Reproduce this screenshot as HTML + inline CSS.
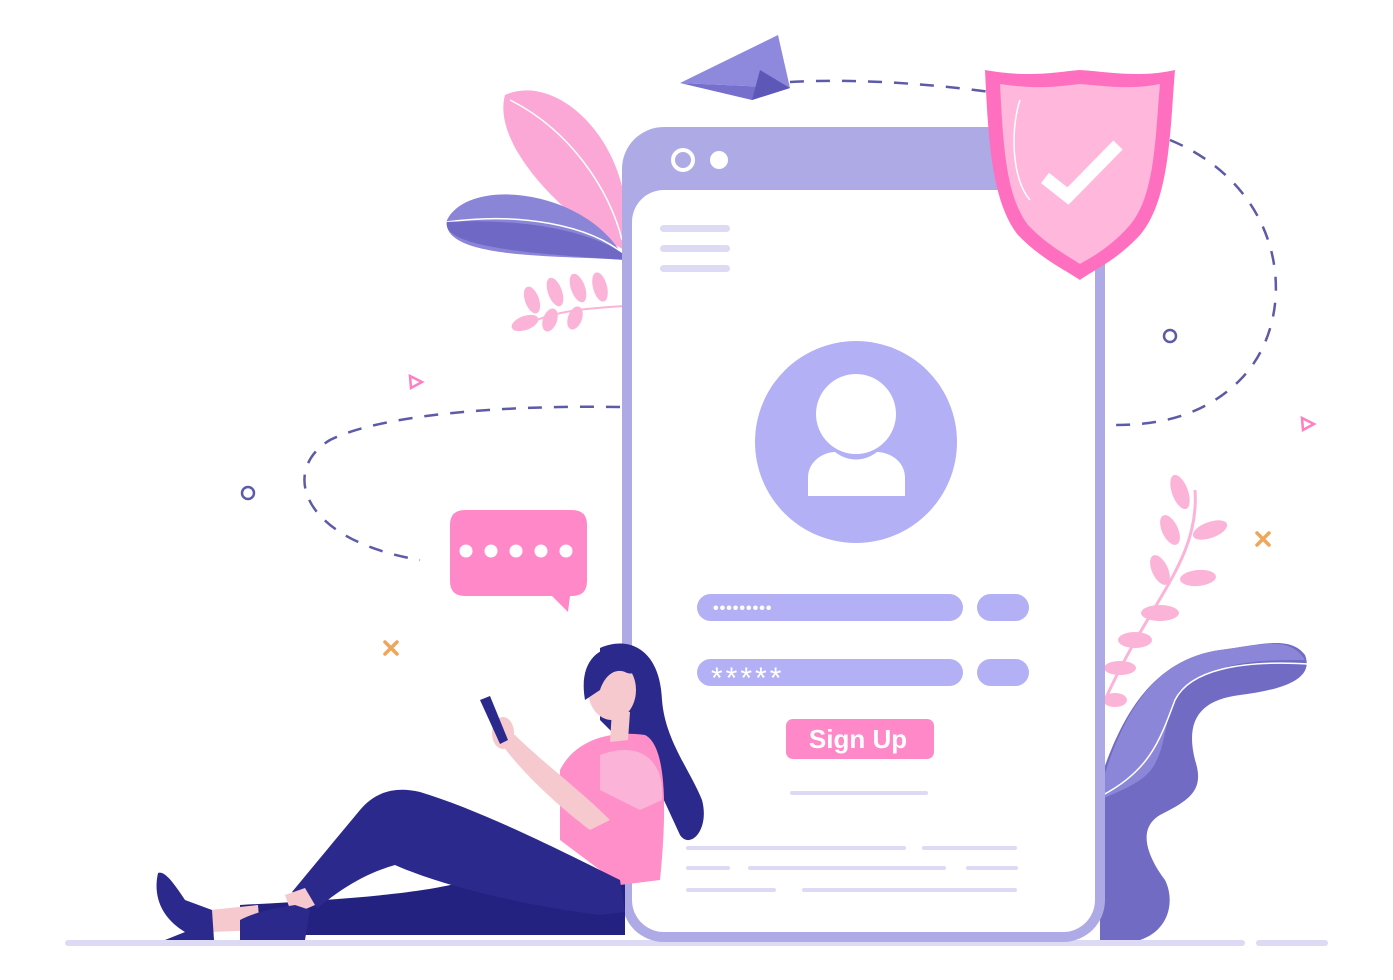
<!DOCTYPE html>
<html><head><meta charset="utf-8"><style>
html,body{margin:0;padding:0;background:#fff;}
svg{display:block}
</style></head><body>
<svg width="1393" height="980" viewBox="0 0 1393 980" xmlns="http://www.w3.org/2000/svg">
<rect width="1393" height="980" fill="#fff"/>
<rect x="65" y="940" width="1180" height="6" rx="3" fill="#dcdaf5"/>
<rect x="1256" y="940" width="72" height="6" rx="3" fill="#dcdaf5"/>
<g fill="none" stroke="#5d5aa8" stroke-width="2.5" stroke-dasharray="14 12">
<path d="M620 407 C 500 405 380 415 330 440 C 280 470 300 540 420 560"/>
<path d="M790 82 C 860 78 940 85 990 92"/>
<path d="M1170 140 C 1290 190 1300 320 1240 380 C 1200 420 1150 425 1115 425"/>
</g>
<circle cx="248" cy="493" r="6" fill="none" stroke="#5d5aa8" stroke-width="2.5"/>
<circle cx="1170" cy="336" r="6" fill="none" stroke="#5d5aa8" stroke-width="2.5"/>
<path d="M410 376 L422 382 L411 388 Z" fill="none" stroke="#ff7fc0" stroke-width="2.5"/>
<path d="M1302 418 L1314 424 L1303 430 Z" fill="none" stroke="#ff7fc0" stroke-width="2.5"/>
<g stroke="#f0a65a" stroke-width="3.5" stroke-linecap="round">
<path d="M385 642 L397 654 M397 642 L385 654"/>
<path d="M1257 533 L1269 545 M1269 533 L1257 545"/>
</g>
<path d="M680 83 L778 35 L790 88 Z" fill="#8e89dd"/>
<path d="M680 83 L790 88 L752 100 Z" fill="#7670cc"/>
<path d="M760 70 L790 88 L752 100 Z" fill="#5d58b8"/>
<path d="M505 95 C 560 70 640 150 625 250 C 580 230 490 150 505 95 Z" fill="#fba8d6"/>
<path d="M510 100 C 570 130 610 190 622 240" stroke="#fff" stroke-width="1.5" fill="none"/>
<path d="M447 220 C 470 175 590 190 625 260 C 560 255 440 260 447 220 Z" fill="#8b85d8"/>
<path d="M447 222 C 520 212 590 225 625 255" stroke="#fff" stroke-width="1.5" fill="none"/>
<path d="M447 222 C 440 250 560 255 625 260 L 625 255 C 590 230 520 218 447 222 Z" fill="#6f69c5"/>
<g fill="#fbb4d8">
<ellipse cx="532" cy="300" rx="7" ry="14" transform="rotate(-20 532 300)"/>
<ellipse cx="555" cy="292" rx="7" ry="15" transform="rotate(-20 555 292)"/>
<ellipse cx="578" cy="288" rx="7" ry="15" transform="rotate(-20 578 288)"/>
<ellipse cx="600" cy="287" rx="7" ry="15" transform="rotate(-15 600 287)"/>
<ellipse cx="525" cy="323" rx="14" ry="7" transform="rotate(-20 525 323)"/>
<ellipse cx="550" cy="320" rx="7" ry="12" transform="rotate(20 550 320)"/>
<ellipse cx="575" cy="318" rx="7" ry="12" transform="rotate(20 575 318)"/>
</g>
<path d="M515 330 C 550 310 590 308 625 306" stroke="#fbb4d8" stroke-width="2" fill="none"/>
<g fill="#fbb4d8">
<ellipse cx="1180" cy="492" rx="8" ry="18" transform="rotate(-20 1180 492)"/>
<ellipse cx="1210" cy="530" rx="18" ry="8" transform="rotate(-20 1210 530)"/>
<ellipse cx="1170" cy="530" rx="8" ry="16" transform="rotate(-25 1170 530)"/>
<ellipse cx="1198" cy="578" rx="18" ry="8" transform="rotate(-5 1198 578)"/>
<ellipse cx="1160" cy="570" rx="8" ry="16" transform="rotate(-25 1160 570)"/>
<ellipse cx="1160" cy="613" rx="19" ry="8"/>
<ellipse cx="1135" cy="640" rx="17" ry="8"/>
<ellipse cx="1120" cy="668" rx="16" ry="7"/>
<ellipse cx="1115" cy="700" rx="12" ry="7"/>
</g>
<path d="M1195 490 C 1200 560 1150 600 1105 700" stroke="#fbb4d8" stroke-width="3" fill="none"/>
<path d="M1100 780 C 1120 720 1150 660 1220 650 C 1260 645 1290 635 1305 655 C 1315 680 1280 690 1240 695 C 1200 700 1185 720 1195 760 C 1205 790 1190 800 1160 815 C 1135 830 1150 860 1165 880 C 1175 900 1170 930 1140 940 L 1100 940 Z" fill="#716bc4"/>
<path d="M1100 790 C 1120 720 1150 660 1220 650 C 1260 645 1290 635 1305 660 C 1260 660 1220 660 1180 690 C 1160 720 1170 760 1140 780 C 1125 790 1110 795 1100 800 Z" fill="#8c86d8"/>
<path d="M1103 795 C 1150 770 1160 740 1175 700 C 1190 670 1240 660 1308 664" stroke="#fff" stroke-width="1.5" fill="none"/>
<rect x="622" y="127" width="483" height="815" rx="42" fill="#aeaae6"/>
<rect x="632" y="190" width="463" height="742" rx="32" fill="#fff"/>
<circle cx="683" cy="160" r="10" fill="none" stroke="#fff" stroke-width="4"/>
<circle cx="719" cy="160" r="9" fill="#fff"/>
<g fill="#dcdaf5">
<rect x="660" y="225" width="70" height="7" rx="3.5"/>
<rect x="660" y="245" width="70" height="7" rx="3.5"/>
<rect x="660" y="265" width="70" height="7" rx="3.5"/>
</g>
<circle cx="856" cy="442" r="101" fill="#b3b0f5"/>
<ellipse cx="856" cy="414" rx="40" ry="40" fill="#fff"/>
<path d="M808 496 L808 478 C 808 460 825 452 835 452 C 848 462 864 462 877 452 C 888 452 905 460 905 478 L905 496 Z" fill="#fff"/>
<rect x="697" y="594" width="266" height="27" rx="13.5" fill="#b3b0f5"/>
<rect x="977" y="594" width="52" height="27" rx="13.5" fill="#b3b0f5"/>
<text x="713" y="613" font-family="Liberation Sans, sans-serif" font-size="16" font-weight="bold" fill="#fff" letter-spacing="1">•••••••••</text>
<rect x="697" y="659" width="266" height="27" rx="13.5" fill="#b3b0f5"/>
<rect x="977" y="659" width="52" height="27" rx="13.5" fill="#b3b0f5"/>
<text x="711" y="688" font-family="Liberation Sans, sans-serif" font-size="30" fill="#fff" letter-spacing="3">*****</text>
<rect x="786" y="719" width="148" height="40" rx="7" fill="#ff88c8"/>
<text x="858" y="748" text-anchor="middle" font-family="Liberation Sans, sans-serif" font-size="26" font-weight="bold" fill="#fff">Sign Up</text>
<g fill="#dcdaf5">
<rect x="790" y="791" width="138" height="4" rx="2"/>
<rect x="686" y="846" width="220" height="4" rx="2"/>
<rect x="922" y="846" width="95" height="4" rx="2"/>
<rect x="686" y="866" width="44" height="4" rx="2"/>
<rect x="748" y="866" width="198" height="4" rx="2"/>
<rect x="966" y="866" width="52" height="4" rx="2"/>
<rect x="686" y="888" width="90" height="4" rx="2"/>
<rect x="802" y="888" width="215" height="4" rx="2"/>
</g>
<path d="M985 70 C 1030 78 1055 72 1080 70 C 1110 72 1140 78 1175 70 C 1170 130 1170 200 1140 235 C 1115 262 1090 272 1080 280 C 1065 270 1040 258 1018 235 C 990 200 988 130 985 70 Z" fill="#ff6fbf"/>
<path d="M1000 84 C 1040 90 1060 86 1080 84 C 1105 86 1130 90 1160 84 C 1155 140 1155 195 1130 225 C 1110 248 1090 258 1080 264 C 1068 256 1048 246 1028 225 C 1005 195 1003 140 1000 84 Z" fill="#ffb8dc"/>
<path d="M1045 178 L1068 196 L1118 145" stroke="#fff" stroke-width="13" fill="none"/>
<path d="M1020 100 C 1010 130 1012 180 1030 200" stroke="#fff" stroke-width="1.5" fill="none"/>
<path d="M465 510 L572 510 Q587 510 587 525 L587 581 Q587 596 572 596 L570 596 L568 612 L552 596 L465 596 Q450 596 450 581 L450 525 Q450 510 465 510 Z" fill="#ff88c8"/>
<g fill="#fff"><circle cx="466" cy="551" r="6.5"/><circle cx="491" cy="551" r="6.5"/><circle cx="516" cy="551" r="6.5"/><circle cx="541" cy="551" r="6.5"/><circle cx="566" cy="551" r="6.5"/></g>
<!-- woman hair back -->
<path d="M600 648 C 630 635 660 650 662 700 C 665 740 690 770 702 800 C 710 830 690 850 680 835 L 650 770 L 600 720 Z" fill="#2b2a8c"/>
<!-- straight leg -->
<path d="M625 875 L 625 935 L 240 935 L 240 905 C 330 900 420 895 470 880 C 530 870 580 865 625 875 Z" fill="#232280"/>
<!-- shirt -->
<path d="M560 770 C 575 740 610 730 645 735 C 665 745 668 800 660 880 L 620 885 L 560 840 Z" fill="#ff8fc8"/>
<path d="M600 755 C 640 740 665 760 662 800 L640 810 L 600 790 Z" fill="#fbb4d8"/>
<!-- bent leg -->
<path d="M620 880 C 560 850 480 810 420 792 C 395 786 375 792 360 810 C 335 840 312 868 292 892 L 318 908 C 345 885 370 872 395 865 C 440 885 520 905 600 915 L 625 912 Z" fill="#2b2a8c"/>
<path d="M612 710 L630 712 L628 740 L610 742 Z" fill="#f6c9cf"/>
<ellipse cx="612" cy="690" rx="24" ry="30" fill="#f6c9cf"/>
<path d="M585 700 C 578 660 600 642 630 648 C 645 655 640 680 625 672 C 615 668 605 675 600 690 Z" fill="#2b2a8c"/>
<path d="M496 735 C 510 760 550 800 590 830 L 610 820 C 580 790 540 760 515 735 Z" fill="#f6c9cf"/>
<ellipse cx="503" cy="733" rx="11" ry="16" fill="#f6c9cf"/>
<path d="M480 700 L490 696 L508 740 L500 744 Z" fill="#2b2a8c"/>
<path d="M210 910 L 258 905 L 260 930 L 210 932 Z" fill="#f6c9cf"/>
<path d="M285 895 L 305 888 L 315 905 L 292 915 Z" fill="#f6c9cf"/>
<path d="M158 873 C 165 870 175 885 185 900 L 212 910 L 214 940 L 165 940 L 185 932 C 165 920 152 900 158 873 Z" fill="#2b2a8c"/>
<path d="M240 920 C 255 912 275 908 295 905 L 310 910 L 305 940 L 240 940 Z" fill="#2b2a8c"/>
</svg>
</body></html>
